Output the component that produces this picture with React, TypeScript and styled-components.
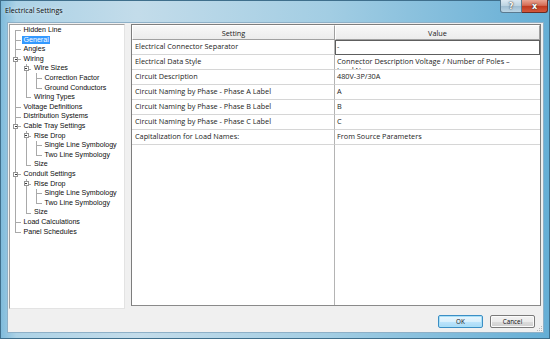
import { Fragment } from 'react';
import styled, { createGlobalStyle } from 'styled-components';

type TreeNode = { label: string; selected?: boolean; children?: TreeNode[] };

const riseDrop = (): TreeNode[] => [
  {
    label: 'Rise Drop',
    children: [{ label: 'Single Line Symbology' }, { label: 'Two Line Symbology' }],
  },
  { label: 'Size' },
];

const tree: TreeNode[] = [
  { label: 'Hidden Line' },
  { label: 'General', selected: true },
  { label: 'Angles' },
  {
    label: 'Wiring',
    children: [
      {
        label: 'Wire Sizes',
        children: [{ label: 'Correction Factor' }, { label: 'Ground Conductors' }],
      },
      { label: 'Wiring Types' },
    ],
  },
  { label: 'Voltage Definitions' },
  { label: 'Distribution Systems' },
  { label: 'Cable Tray Settings', children: riseDrop() },
  { label: 'Conduit Settings', children: riseDrop() },
  { label: 'Load Calculations' },
  { label: 'Panel Schedules' },
];

type FlatRow = {
  node: TreeNode;
  guides: boolean[];
  last: boolean;
  first: boolean;
};

const flatten = (nodes: TreeNode[], guides: boolean[] = [], out: FlatRow[] = []) => {
  nodes.forEach((node, i) => {
    const last = i === nodes.length - 1;
    out.push({ node, guides, last, first: guides.length === 0 && i === 0 });
    if (node.children) flatten(node.children, [...guides, !last], out);
  });
  return out;
};

const settings = [
  { name: 'Electrical Connector Separator', value: '-', editing: true },
  {
    name: 'Electrical Data Style',
    // wraps after the dash in the original; second line is clipped by the row
    value: 'Connector Description Voltage / Number of Poles \u2013\nLoad Name',
  },
  { name: 'Circuit Description', value: '480V-3P/30A' },
  { name: 'Circuit Naming by Phase - Phase A Label', value: 'A' },
  { name: 'Circuit Naming by Phase - Phase B Label', value: 'B' },
  { name: 'Circuit Naming by Phase - Phase C Label', value: 'C' },
  { name: 'Capitalization for Load Names:', value: 'From Source Parameters' },
];

const GlobalStyle = createGlobalStyle`
  html, body {
    margin: 0;
    padding: 0;
    width: 550px;
    height: 339px;
    overflow: hidden;
    background: #ffffff;
  }
`;

const Window = styled.div`
  width: 550px;
  height: 339px;
  box-sizing: border-box;
  display: flex;
  flex-direction: column;
  padding: 0 6px 6px 7px;
  background: linear-gradient(90deg, #7dbadb 0%, #acd2e6 3%, #c3dcea 25%, #a2cde3 60%, #65aed5 100%);
  box-shadow: inset 0 0 0 1px #3f6f8c;
  font-family: 'Liberation Sans', Arial, sans-serif;
`;

const TitleBar = styled.div`
  height: 22px;
  display: flex;
  align-items: flex-start;
  justify-content: space-between;
  margin-left: -2px;
  margin-right: -4px;
`;

const Title = styled.div`
  font-family: 'Open Sans', 'Liberation Sans', sans-serif;
  font-size: 7.1px;
  color: #0b0b0b;
  line-height: 20px;
  text-shadow: 0 0 4px rgba(255, 255, 255, 0.9);
`;

const Caption = styled.div`
  display: flex;
`;

const CapButton = styled.div<{ $close?: boolean }>`
  width: ${(p) => (p.$close ? '26px' : '22px')};
  height: 13px;
  box-sizing: border-box;
  display: flex;
  align-items: center;
  justify-content: center;
  border: 1px solid ${(p) => (p.$close ? '#6b2b22' : '#5a7a90')};
  border-top: none;
  border-left-width: ${(p) => (p.$close ? '0' : '1px')};
  border-radius: ${(p) => (p.$close ? '0 0 3px 0' : '0 0 0 3px')};
  background: ${(p) =>
    p.$close
      ? 'linear-gradient(#e9a593, #d66c55 45%, #c0391f 52%, #d4583c)'
      : 'linear-gradient(#dce9f2, #bcd3e1 48%, #9fbdd1 52%, #bcd6e6)'};
  color: #ffffff;
  font-family: 'DejaVu Sans', sans-serif;
  font-weight: bold;
  font-size: 8px;
  text-shadow: 0 0 1px #333, 0 0 2px #444;
`;

const Client = styled.div`
  flex: 1;
  position: relative;
  display: flex;
  flex-direction: column;
  background: #f0f0f0;
  border: 1px solid #8eb0c7;
  padding: 1px 2px 0 1px;
`;

const Panes = styled.div`
  display: flex;
  gap: 6px;
  height: 285px;
`;

const TreePane = styled.div`
  width: 116px;
  box-sizing: border-box;
  background: #ffffff;
  border: 1px solid #a0a0a0;
  border-right-color: #e3e3e3;
  border-bottom-color: #e3e3e3;
  padding-top: 0.5px;
`;

const TreeRow = styled.div`
  display: flex;
  align-items: center;
  height: 9.6px;
`;

const Guide = styled.div<{ $line: boolean }>`
  position: relative;
  width: 10.5px;
  height: 100%;
  flex: none;
  &::before {
    content: '';
    display: ${(p) => (p.$line ? 'block' : 'none')};
    position: absolute;
    left: 5px;
    top: 0;
    bottom: 0;
    border-left: 1px solid #a9a9a9;
  }
`;

const Branch = styled.div<{ $last: boolean; $first: boolean }>`
  position: relative;
  width: 10.5px;
  height: 100%;
  flex: none;
  &::before {
    content: '';
    position: absolute;
    left: 5px;
    top: ${(p) => (p.$first ? '50%' : '0')};
    bottom: ${(p) => (p.$last ? '50%' : '0')};
    border-left: 1px solid #a9a9a9;
  }
  &::after {
    content: '';
    position: absolute;
    left: 5px;
    right: 0;
    top: 50%;
    border-top: 1px solid #a9a9a9;
  }
`;

const Expander = styled.div`
  position: absolute;
  z-index: 1;
  left: 3px;
  top: 50%;
  width: 5px;
  height: 5px;
  margin-top: -2.5px;
  box-sizing: border-box;
  border: 1px solid #949494;
  background: #ffffff;
  &::before {
    content: '';
    position: absolute;
    left: 0.5px;
    right: 0.5px;
    top: 1px;
    border-top: 1px solid #3a3a3a;
  }
`;

const Label = styled.div<{ $selected?: boolean }>`
  margin-left: 1.5px;
  padding: 0 1.5px;
  height: 8.4px;
  line-height: 8.4px;
  font-size: 7.1px;
  white-space: nowrap;
  color: ${(p) => (p.$selected ? '#ffffff' : '#0d0d0d')};
  background: ${(p) => (p.$selected ? '#3399ff' : 'transparent')};
`;

const GridPane = styled.div`
  flex: 1;
  box-sizing: border-box;
  border: 1px solid #7d7d7d;
  border-bottom-color: #8a8a8a;
  background: #ffffff;
  display: grid;
  grid-template-columns: 203px 1fr;
  grid-template-rows: 15px repeat(7, 15px) 1fr;
  height: 282px;
  font-family: 'Open Sans', 'Liberation Sans', sans-serif;
  font-size: 7.3px;
  color: #1b1b1b;
`;

const HeadCell = styled.div`
  box-sizing: border-box;
  display: flex;
  align-items: center;
  justify-content: center;
  background: linear-gradient(#f7f7f7, #ececec);
  border-right: 1px solid #a0a0a0;
  border-bottom: 1px solid #a0a0a0;
  border-top: 1px solid #ffffff;
  border-left: 1px solid #ffffff;
`;

const Cell = styled.div<{ $value?: boolean; $editing?: boolean }>`
  box-sizing: border-box;
  overflow: hidden;
  white-space: pre-line;
  padding: 2px 2px 0 ${(p) => (p.$value ? '2px' : '3px')};
  line-height: 9px;
  border-bottom: 1px solid #d6d6d6;
  border-right: ${(p) => (p.$value ? '0' : '1px solid #b4b4b4')};
  ${(p) =>
    p.$editing &&
    `
    border: 1.5px solid #5e5e5e;
    padding: 1px 2px 0 1px;
  `}
`;

const Filler = styled.div<{ $value?: boolean }>`
  border-right: ${(p) => (p.$value ? '0' : '1px solid #b4b4b4')};
`;

const ButtonRow = styled.div`
  display: flex;
  justify-content: flex-end;
  gap: 7px;
  margin-top: 6px;
  padding-right: 6px;
`;

const Button = styled.div<{ $default?: boolean }>`
  width: 45px;
  height: 13px;
  box-sizing: border-box;
  border-radius: 2px;
  display: flex;
  align-items: center;
  justify-content: center;
  font-family: 'Open Sans', 'Liberation Sans', sans-serif;
  font-size: 6.3px;
  color: #111111;
  border: 1px solid ${(p) => (p.$default ? '#3c8ec4' : '#7a7a7a')};
  box-shadow: inset 0 0 0 1px ${(p) => (p.$default ? '#a9e0f8' : '#fbfbfb')};
  background: ${(p) =>
    p.$default
      ? 'linear-gradient(#eaf6fd, #d9f0fc 50%, #bee6fd 50%, #a7d9f5)'
      : 'linear-gradient(#f2f2f2, #ebebeb 50%, #dddddd 50%, #cfcfcf)'};
`;

const Grip = styled.svg`
  position: absolute;
  right: 0;
  bottom: 0;
`;

export default function App() {
  const rows = flatten(tree);
  return (
    <>
      <GlobalStyle />
      <Window>
        <TitleBar>
          <Title>Electrical Settings</Title>
          <Caption>
            <CapButton>?</CapButton>
            <CapButton $close>x</CapButton>
          </Caption>
        </TitleBar>
        <Client>
          <Panes>
            <TreePane>
              {rows.map((r, i) => (
                <TreeRow key={i}>
                  {r.guides.map((g, j) => (
                    <Guide key={j} $line={g} />
                  ))}
                  <Branch $last={r.last} $first={r.first}>
                    {r.node.children && <Expander />}
                  </Branch>
                  <Label $selected={r.node.selected}>{r.node.label}</Label>
                </TreeRow>
              ))}
            </TreePane>
            <GridPane>
              <HeadCell>Setting</HeadCell>
              <HeadCell>Value</HeadCell>
              {settings.map((s) => (
                <Fragment key={s.name}>
                  <Cell>{s.name}</Cell>
                  <Cell $value $editing={s.editing}>
                    {s.value}
                  </Cell>
                </Fragment>
              ))}
              <Filler />
              <Filler $value />
            </GridPane>
          </Panes>
          <ButtonRow>
            <Button $default>OK</Button>
            <Button>Cancel</Button>
          </ButtonRow>
          <Grip width="6" height="6" viewBox="0 0 6 6">
            <g fill="#b8b8b8">
              <rect x="4" y="0" width="1" height="1" />
              <rect x="2" y="2" width="1" height="1" />
              <rect x="4" y="2" width="1" height="1" />
              <rect x="0" y="4" width="1" height="1" />
              <rect x="2" y="4" width="1" height="1" />
              <rect x="4" y="4" width="1" height="1" />
            </g>
          </Grip>
        </Client>
      </Window>
    </>
  );
}
